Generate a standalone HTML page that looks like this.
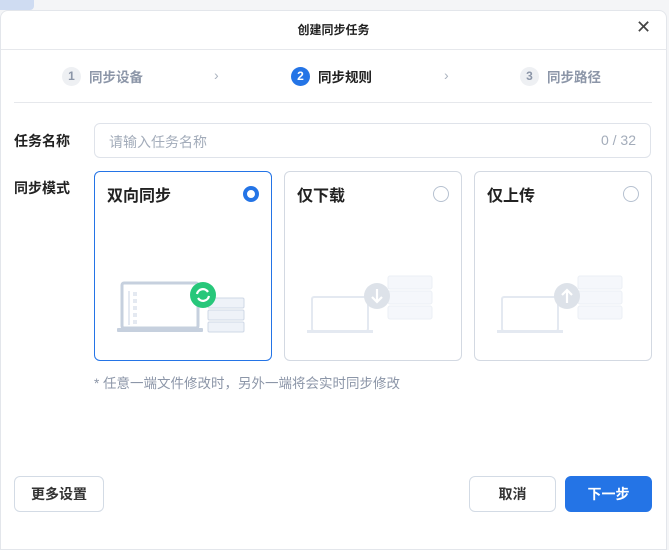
<!DOCTYPE html>
<html><head><meta charset="utf-8"><style>
*{box-sizing:border-box;margin:0;padding:0}
body{width:669px;height:530px;background:#f4f5f7;font-family:"Liberation Sans","Noto Sans CJK SC",sans-serif;position:relative;overflow:hidden;color:#1f2329}
.tab{position:absolute;left:0;top:0;width:34px;height:10px;background:#cfdcf2;border-radius:0 0 4px 0}
.dlg{position:absolute;left:0;top:10px;width:667px;height:540px;background:#fff;border:1px solid #e3e6eb;border-radius:8px 8px 0 0}
.a{position:absolute}
.title{left:0;width:667px;top:21px;text-align:center;font-size:12px;font-weight:bold;color:#222}
.close{left:636px;top:17px;font-size:18px;color:#444}
.hr{height:1px;background:#e6e8ec}
.step{top:66px;font-size:13.5px;font-weight:bold;color:#8c96a8;display:flex;align-items:center}
.step b{display:inline-block;width:19px;height:19px;border-radius:50%;background:#eef0f3;color:#8c96a8;text-align:center;line-height:19px;font-size:12px;margin-right:8px}
.step.on{color:#222}.step.on b{background:#2474e6;color:#fff}
.chev{top:67px;font-size:14px;color:#aab2bf}
.lbl{left:14px;font-size:14px;font-weight:bold;color:#222}
.input{left:94px;top:123px;width:557px;height:35px;border:1px solid #dfe3ea;border-radius:6px;font-size:14px;color:#a3acba;padding:8px 14px;display:flex;justify-content:space-between}
.card{top:171px;width:178px;height:190px;border:1px solid #d3d9e2;border-radius:6px}
.card.on{border-color:#2474e6}
.card .t{position:absolute;left:12px;top:10px;font-size:16px;font-weight:bold;color:#222}
.radio{position:absolute;right:12px;top:14px;width:16px;height:16px;border-radius:50%;border:1px solid #b6c1d0}
.card.on .radio{border:4.5px solid #2474e6}
.card svg{position:absolute;left:0;top:0}
.note{left:94px;top:372px;font-size:13.5px;color:#8c96a8}
.btn{top:476px;height:36px;border:1px solid #d3dbe5;border-radius:6px;font-size:14px;font-weight:bold;color:#333;text-align:center;line-height:34px}
.primary{background:#2474e6;border-color:#2474e6;color:#fff}
</style></head><body>
<div class="tab"></div>
<div class="dlg"></div>
<div class="a title">创建同步任务</div>
<div class="a close">✕</div>
<div class="a hr" style="left:1px;width:666px;top:49px"></div>
<div class="a step" style="left:62px"><b>1</b>同步设备</div>
<div class="a chev" style="left:214px">›</div>
<div class="a step on" style="left:291px"><b>2</b>同步规则</div>
<div class="a chev" style="left:444px">›</div>
<div class="a step" style="left:520px"><b>3</b>同步路径</div>
<div class="a hr" style="left:14px;width:638px;top:102px"></div>
<div class="a lbl" style="top:131px">任务名称</div>
<div class="a input"><span>请输入任务名称</span><span>0 / 32</span></div>
<div class="a lbl" style="top:178px">同步模式</div>

<div class="a card on" style="left:94px"><div class="t">双向同步</div><div class="radio"></div>
<svg width="178" height="190">
<rect x="27" y="111" width="76" height="45" rx="2" fill="#fff" stroke="#c6d0de" stroke-width="3"/>
<rect x="33" y="119" width="2" height="34" fill="#e4e9f1"/>
<g fill="#e4e9f1"><rect x="38" y="120" width="4" height="4"/><rect x="38" y="127" width="4" height="4"/><rect x="38" y="134" width="4" height="4"/><rect x="38" y="141" width="4" height="4"/><rect x="38" y="148" width="4" height="4"/></g>
<rect x="22" y="156" width="86" height="4" rx="1" fill="#c6d0de"/>
<g fill="#eef2f8" stroke="#cfd8e6"><rect x="113" y="126" width="36" height="10" rx="1.5"/><rect x="113" y="138" width="36" height="10" rx="1.5"/><rect x="113" y="150" width="36" height="10" rx="1.5"/></g>
<circle cx="108" cy="123" r="13" fill="#27c77a"/>
<path d="M102 122a6 6 0 0 1 11-2M114 124a6 6 0 0 1-11 2" stroke="#fff" stroke-width="2.2" fill="none"/>
</svg></div>

<div class="a card" style="left:284px"><div class="t">仅下载</div><div class="radio"></div>
<svg width="178" height="190" opacity="0.55">
<rect x="27" y="125" width="56" height="34" rx="2" fill="#fff" stroke="#cfd8e6" stroke-width="2"/>
<rect x="22" y="158" width="66" height="3" fill="#cfd8e6"/>
<g fill="#eef2f8" stroke="#dce3ed"><rect x="103" y="104" width="44" height="13" rx="2"/><rect x="103" y="119" width="44" height="13" rx="2"/><rect x="103" y="134" width="44" height="13" rx="2"/></g>
<circle cx="92" cy="124" r="13" fill="#c2cbd8"/>
<path d="M92 117v12M87 125l5 5 5-5" stroke="#fff" stroke-width="2.2" fill="none"/>
</svg></div>

<div class="a card" style="left:474px"><div class="t">仅上传</div><div class="radio"></div>
<svg width="178" height="190" opacity="0.55">
<rect x="27" y="125" width="56" height="34" rx="2" fill="#fff" stroke="#cfd8e6" stroke-width="2"/>
<rect x="22" y="158" width="66" height="3" fill="#cfd8e6"/>
<g fill="#eef2f8" stroke="#dce3ed"><rect x="103" y="104" width="44" height="13" rx="2"/><rect x="103" y="119" width="44" height="13" rx="2"/><rect x="103" y="134" width="44" height="13" rx="2"/></g>
<circle cx="92" cy="124" r="13" fill="#c2cbd8"/>
<path d="M92 131v-12M87 123l5-5 5 5" stroke="#fff" stroke-width="2.2" fill="none"/>
</svg></div>

<div class="a note">* 任意一端文件修改时，另外一端将会实时同步修改</div>
<div class="a btn" style="left:14px;width:90px">更多设置</div>
<div class="a btn" style="left:469px;width:87px">取消</div>
<div class="a btn primary" style="left:565px;width:87px">下一步</div>
</body></html>
